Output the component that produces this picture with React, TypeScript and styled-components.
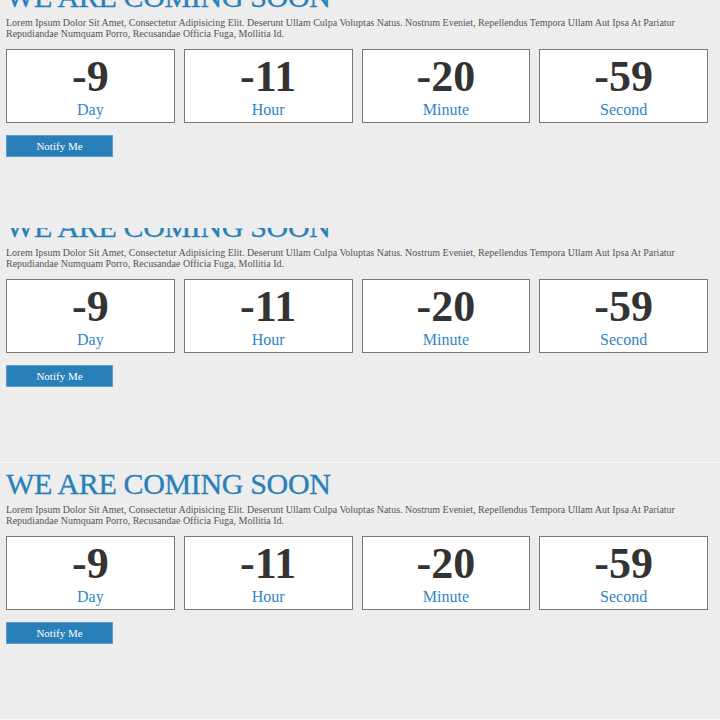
import React from "react";
import styled, { createGlobalStyle } from "styled-components";

const GlobalStyle = createGlobalStyle`
  html, body {
    margin: 0;
    padding: 0;
    background: #ededed;
  }
  body {
    font-family: "Liberation Serif", "Times New Roman", serif;
  }
`;

const Page = styled.div`
  display: flex;
  flex-direction: column;
  width: 720px;
  height: 720px;
  overflow: hidden;
  background: #ededed;
`;

const Frame = styled.section<{ $height: number; $divider?: boolean }>`
  height: ${(p) => p.$height}px;
  overflow: hidden;
  flex-shrink: 0;
  border-top: ${(p) => (p.$divider ? "1px solid #fafafa" : "none")};
  border-bottom: ${(p) => (p.$divider ? "1px solid #fafafa" : "none")};
`;

const Content = styled.div<{ $shift: number }>`
  margin-top: ${(p) => p.$shift}px;
  padding: 0 12px 0 6px;
  display: flex;
  flex-direction: column;
`;

const Heading = styled.h1`
  margin: 3px 0 0;
  font-size: 30px;
  line-height: 36px;
  letter-spacing: -0.35px;
  font-weight: normal;
  color: #2980b9;
  white-space: nowrap;
  -webkit-text-stroke: 0.3px #2980b9;
`;

const Lead = styled.p`
  margin: 1.5px 0 0;
  font-size: 10px;
  line-height: 11px;
  color: #555;
  text-transform: capitalize;
`;

const Counters = styled.div`
  margin-top: 10px;
  display: grid;
  grid-template-columns: repeat(4, 1fr);
  column-gap: 9px;
`;

const Counter = styled.div`
  background: #fff;
  border: 1px solid #777;
  padding: 5px 0 4px;
  display: flex;
  flex-direction: column;
  align-items: center;
`;

const Value = styled.span`
  font-size: 44px;
  line-height: 44px;
  font-weight: bold;
  color: #333;
`;

const Unit = styled.span`
  margin-top: 3px;
  font-size: 16px;
  line-height: 16px;
  color: #2e86c7;
`;

const NotifyButton = styled.button`
  margin-top: 12px;
  align-self: flex-start;
  width: 107px;
  height: 22px;
  padding: 0;
  border: 1px solid #5a9fd0;
  background: #2980b9;
  color: #fff;
  font-family: "Liberation Serif", "Times New Roman", serif;
  font-size: 11px;
  line-height: 20px;
  cursor: pointer;
`;

const counters = [
  { value: "-9", unit: "Day" },
  { value: "-11", unit: "Hour" },
  { value: "-20", unit: "Minute" },
  { value: "-59", unit: "Second" },
];

const text =
  "Lorem ipsum dolor sit amet, consectetur adipisicing elit. Deserunt ullam culpa voluptas natus. Nostrum eveniet, repellendus tempora ullam aut ipsa at pariatur repudiandae numquam porro, recusandae officia fuga, mollitia id.";

function ComingSoon({ shift }: { shift: number }) {
  return (
    <Content $shift={shift}>
      <Heading>WE ARE COMING SOON</Heading>
      <Lead>{text}</Lead>
      <Counters>
        {counters.map((c) => (
          <Counter key={c.unit}>
            <Value>{c.value}</Value>
            <Unit>{c.unit}</Unit>
          </Counter>
        ))}
      </Counters>
      <NotifyButton>Notify Me</NotifyButton>
    </Content>
  );
}

export default function App() {
  return (
    <>
      <GlobalStyle />
      <Page>
        <Frame $height={228}>
          <ComingSoon shift={-24} />
        </Frame>
        <Frame $height={234}>
          <ComingSoon shift={-22} />
        </Frame>
        <Frame $height={256} $divider>
          <ComingSoon shift={0} />
        </Frame>
      </Page>
    </>
  );
}
